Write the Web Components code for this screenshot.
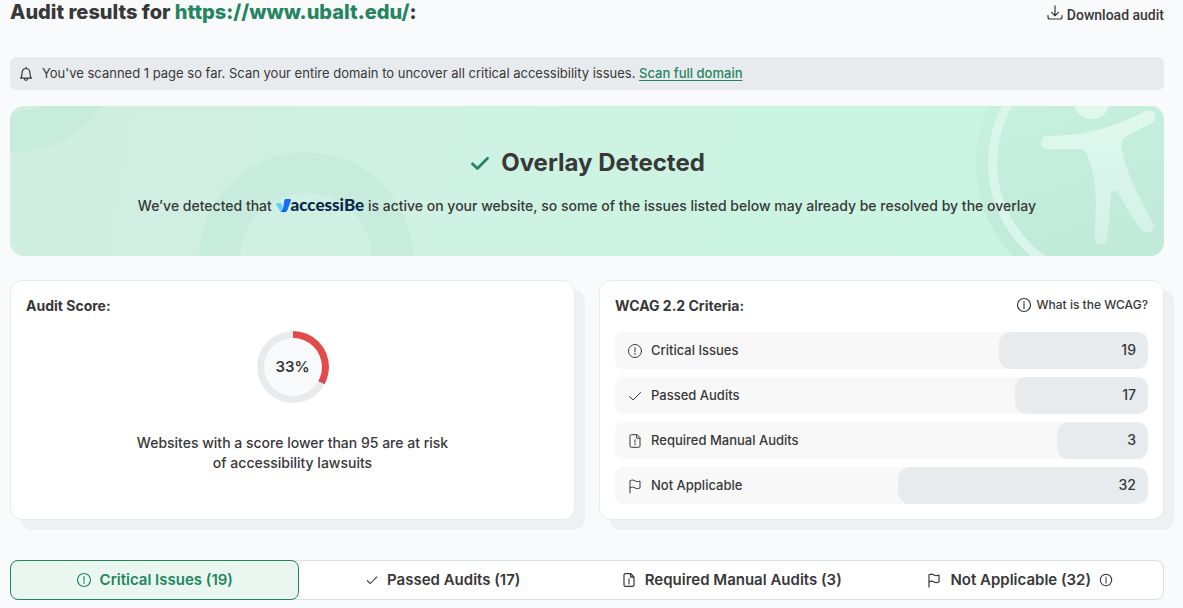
<!DOCTYPE html>
<html lang="en">
<head>
<meta charset="utf-8">
<meta name="viewport" content="width=device-width, initial-scale=1">
<title>Audit results</title>
<style>
  body {
    margin: 0;
    background: #f9fafc;
    color: #383838;
    font-family: Inter, "Liberation Sans", sans-serif;
    font-size: 14px;
    line-height: 20px;
  }
</style>
</head>
<body>
<audit-page></audit-page>

<script>
const define = (name, markup, setup) => {
  const template = document.createElement('template');
  template.innerHTML = markup;
  customElements.define(name, class extends HTMLElement {
    constructor() {
      super();
      this.attachShadow({ mode: 'open' }).append(template.content.cloneNode(true));
    }
    connectedCallback() { if (setup) setup(this, this.shadowRoot); }
  });
};

const icons = {
  alert: '<circle cx="8" cy="8" r="6.5"/><path d="M8 4.6v4.2M8 10.3v1.2"/>',
  info: '<circle cx="8" cy="8" r="6.5"/><path d="M8 7.3v4.2M8 4.6v1.3"/>',
  check: '<path d="M2.5 8.6l3.6 3.4 7.4-7.5"/>',
  file: '<path d="M9.8 1.7H4.2a1.2 1.2 0 0 0-1.2 1.2v10.2a1.2 1.2 0 0 0 1.2 1.2h7.6a1.2 1.2 0 0 0 1.2-1.2V5zM9.6 1.9v3.3h3.2M8 6.8v2.6M8 10.7v1.2"/>',
  flag: '<path d="M3 15V2.8c2-1.2 3.6-.8 5 .1s3 1 5 .1v7c-2 .9-3.600.8-5-.1s-3-1.100-5-.1"/>',
  bell: '<path d="M2.600 12.200h10.800c-1-1-1.400-2.200-1.400-4.700 0-3-1.500-5-4-5s-4 2-4 5c0 2.500-.4 3.700-1.400 4.700zM6.300 12.500c.2 1.300.8 1.800 1.700 1.800s1.500-.5 1.700-1.800M8 1.400v1"/>',
  download: '<path d="M8 .8v9.800M4.600 7.400L8 10.700l3.400-3.300M1 10.500v1.500c0 1.400.8 2 2 2h10c1.200 0 2-.6 2-2v-1.500"/>'
};

define('ui-icon', `
  <style>
    :host { display: inline-flex; flex: none; width: 16px; height: 16px; }
    svg { width: 100%; height: 100%; fill: none; stroke: currentColor; stroke-width: var(--stroke, 1.2); stroke-linecap: round; stroke-linejoin: round; }
  </style>
  <svg viewBox="0 0 16 16" aria-hidden="true"></svg>`,
  (host, root) => { root.querySelector('svg').innerHTML = icons[host.getAttribute('name')]; });

define('audit-header', `
  <style>
    :host { display: flex; justify-content: space-between; align-items: flex-start; }
    h1 { margin: 0; font-size: 20px; line-height: 24px; font-weight: 800; }
    h1 a { color: #25855f; text-decoration: none; }
    button { display: flex; align-items: flex-start; gap: 4px; margin: 5px 0 0; padding: 0; border: 0; background: none; color: inherit; font: 500 14px/20px Roboto, sans-serif; cursor: pointer; }
  </style>
  <h1>Audit results for <a href="https://www.ubalt.edu/">https://www.ubalt.edu/</a>:</h1>
  <button type="button"><ui-icon name="download"></ui-icon>Download audit</button>`);

define('scan-notice', `
  <style>
    :host { display: flex; align-items: center; gap: 8px; min-height: 33px; padding: 0 8px; border-radius: 6px; background: #e8ebed; font-size: 13px; }
    span { padding-bottom: 2px; }
    a { color: #25855f; text-underline-offset: 2px; font-weight: 500; }
  </style>
  <ui-icon name="bell"></ui-icon>
  <span><slot></slot> <a href="#full-scan">Scan full domain</a></span>`);

define('accessibe-logo', `
  <style>
    :host { display: inline-flex; align-items: center; color: #0d2a49; font: 900 17px/18px Lato, sans-serif; }
    svg { width: 15px; height: 13px; }
  </style>
  <svg viewBox="0 0 45 39" aria-hidden="true">
    <path fill="#62d0ff" d="M3 12h10q3 0 4 3l7 23h-8q-4 0-5-4L0 16q-1-4 3-4z"/>
    <path fill="#146ef5" d="M29 0h12q5 0 4 4L34 34q-2 5-6 5H14q6-2 7-8l4-27q1-4 4-4z"/>
    <path fill="#0b45b5" d="M21 23l5 16H14q5-2 7-8z" opacity=".6"/>
  </svg>
  <span>accessiBe</span>`);

define('overlay-banner', `
  <style>
    :host { display: flex; flex-direction: column; align-items: center; justify-content: center; gap: 18px; position: relative; isolation: isolate; overflow: hidden; box-sizing: border-box; min-height: 150px; padding: 18px 16px 16px; border-radius: 14px; background: linear-gradient(100deg, #d1eee2 10%, #cdf3e3 50%, #caf5e2 85%); text-align: center; }
    .art { position: absolute; z-index: -1; top: 0; height: 150px; }
    .rings { left: 0; width: 410px; }
    .figure { right: 0; width: 190px; }
    h2 { display: flex; align-items: center; gap: 10px; margin: 0; font-size: 24px; line-height: 30px; font-weight: 700; }
    h2 ui-icon { width: 22px; height: 22px; color: #25855f; --stroke: 2; }
    p { margin: 0; font-weight: 500; }
    accessibe-logo { vertical-align: top; }
  </style>
  <svg class="art rings" viewBox="10 106 410 150" fill="none" stroke="#c7ecdd" stroke-width="41" aria-hidden="true">
    <circle cx="15" cy="45" r="86.500"/><circle cx="306" cy="259" r="86.500"/>
  </svg>
  <svg class="art figure" viewBox="974 106 190 150" aria-hidden="true">
    <defs>
      <linearGradient id="disc" x1="0" y1="0" x2="0.300" y2="1"><stop offset="0.200" stop-color="#c8f1df"/><stop offset="0.850" stop-color="#c0ebd9"/></linearGradient>
      <linearGradient id="body" gradientUnits="userSpaceOnUse" x1="0" y1="20" x2="0" y2="440"><stop offset="0" stop-color="#dff8ee"/><stop offset="1" stop-color="#d3f2e8"/></linearGradient>
    </defs>
    <circle cx="1110" cy="163" r="134.500" fill="url(#disc)"/>
    <circle cx="1110" cy="163" r="117.500" fill="none" stroke="#daf6ec" stroke-width="9"/>
    <g transform="translate(940 100) scale(.33333)" fill="url(#body)">
      <circle cx="455" cy="5" r="53"/>
      <path d="M322 108C430 106 510 88 618 32C638 22 658 53 639 67L562 107Q542 117 543 135C553 210 596 290 638 367C651 390 620 408 605 389C580 358 558 322 539 284C533 268 514 269 512 282C511 325 506 370 501 415C498 438 464 438 463 413C467 360 468 320 467 285C466 240 455 200 441 163Q436 147 420 147H322C297 147 297 108 322 108Z"/>
    </g>
  </svg>
  <h2><ui-icon name="check"></ui-icon>Overlay Detected</h2>
  <p>We’ve detected that <accessibe-logo></accessibe-logo> is active on your website, so some of the issues listed below may already be resolved by the overlay</p>`);

define('audit-card', `
  <style>
    :host { display: flex; flex-direction: column; box-sizing: border-box; min-height: 240px; padding: 15px 15px; border: 1px solid #e8ebed; border-radius: 12px; background: #fff; box-shadow: 10px 10px 0 #eff0f2; }
    header { display: flex; align-items: flex-start; justify-content: space-between; height: 20px; }
    h3 { margin: 0; font-size: 14px; line-height: 20px; font-weight: 700; }
  </style>
  <header><h3><slot name="title"></slot></h3><slot name="action"></slot></header>
  <slot></slot>`);

define('score-ring', `
  <style>
    :host { display: flex; flex-direction: column; align-items: center; gap: 30px; margin-top: 15px; text-align: center; font-weight: 500; }
    .ring { display: grid; place-items: center; width: 72px; height: 72px; border-radius: 50%; background: conic-gradient(#e34a4a var(--score), #e8ebed 0); }
    .value { display: grid; place-items: center; width: 58px; height: 58px; border-radius: 50%; background: #f9fafc; font-size: 15px; font-weight: 600; }
    p { margin: 0; max-width: 320px; }
  </style>
  <div class="ring"><div class="value"></div></div>
  <p><slot></slot></p>`,
  (host, root) => {
    const score = host.getAttribute('score') + '%';
    root.querySelector('.ring').style.setProperty('--score', score);
    root.querySelector('.value').textContent = score;
  });

define('criteria-row', `
  <style>
    :host { display: flex; justify-content: space-between; height: 37px; border-radius: 8px; background: #f8f8f8; font-weight: 500; }
    .name { display: flex; align-items: center; gap: 8px; padding-left: 12px; font-size: 13px; }
    .name span { padding-bottom: 2px; }
    .bar { box-sizing: border-box; padding: 0 12px; border-radius: 12px; background: #e8ebee; text-align: right; line-height: 36px; }
    ui-icon { --stroke: 1; }
  </style>
  <span class="name"><ui-icon></ui-icon><span><slot></slot></span></span>
  <span class="bar"></span>`,
  (host, root) => {
    const icon = document.createElement('ui-icon');
    icon.setAttribute('name', host.getAttribute('icon'));
    root.querySelector('ui-icon').replaceWith(icon);
    const bar = root.querySelector('.bar');
    bar.textContent = host.getAttribute('count');
    bar.style.width = host.getAttribute('share');
  });

define('audit-tabs', `
  <style>
    :host { display: grid; grid-template-columns: repeat(4, 1fr); border-radius: 8px; background: #fff; box-shadow: inset 0 0 0 1px #dcdee0; }
    button { display: flex; align-items: center; justify-content: center; gap: 8px; height: 40px; padding: 0; border: 1px solid transparent; border-radius: 8px; background: none; color: inherit; font: inherit; font-size: 15px; font-weight: 600; cursor: pointer; }
    button[aria-selected="true"] { border-color: #25855f; background: #eaf7f1; color: #25855f; }
    .small { width: 14px; height: 14px; }
  </style>
  <button type="button" role="tab" aria-selected="true"><ui-icon name="alert"></ui-icon>Critical Issues (19)</button>
  <button type="button" role="tab" aria-selected="false"><ui-icon class="small" name="check"></ui-icon>Passed Audits (17)</button>
  <button type="button" role="tab" aria-selected="false"><ui-icon name="file"></ui-icon>Required Manual Audits (3)</button>
  <button type="button" role="tab" aria-selected="false"><ui-icon name="flag"></ui-icon>Not Applicable (32)<ui-icon class="small" name="info"></ui-icon></button>`,
  (host) => host.setAttribute('role', 'tablist'));

define('audit-page', `
  <style>
    :host { display: block; padding: 0 19px 8px 10px; }
    audit-header { height: 24px; margin-bottom: 33px; }
    scan-notice { margin-bottom: 16px; }
    overlay-banner { margin-bottom: 24px; }
    .cards { display: grid; grid-template-columns: 1fr 1fr; gap: 24px; margin-bottom: 40px; }
    .rows { display: flex; flex-direction: column; gap: 8px; margin-top: 16px; }
    .help { display: flex; align-items: center; gap: 5px; color: inherit; text-decoration: none; font-size: 12px; line-height: 18px; font-weight: 500; }
  </style>
  <audit-header></audit-header>
  <scan-notice>You've scanned 1 page so far. Scan your entire domain to uncover all critical accessibility issues.</scan-notice>
  <overlay-banner></overlay-banner>
  <div class="cards">
    <audit-card>
      <span slot="title">Audit Score:</span>
      <score-ring score="33">Websites with a score lower than 95 are at risk of accessibility lawsuits</score-ring>
    </audit-card>
    <audit-card>
      <span slot="title">WCAG 2.2 Criteria:</span>
      <a class="help" slot="action" href="#wcag"><ui-icon name="info"></ui-icon>What is the WCAG?</a>
      <div class="rows">
        <criteria-row icon="alert" count="19" share="28%">Critical Issues</criteria-row>
        <criteria-row icon="check" count="17" share="25%">Passed Audits</criteria-row>
        <criteria-row icon="file" count="3" share="17%">Required Manual Audits</criteria-row>
        <criteria-row icon="flag" count="32" share="47%">Not Applicable</criteria-row>
      </div>
    </audit-card>
  </div>
  <audit-tabs></audit-tabs>`);
</script>
</body>
</html>
